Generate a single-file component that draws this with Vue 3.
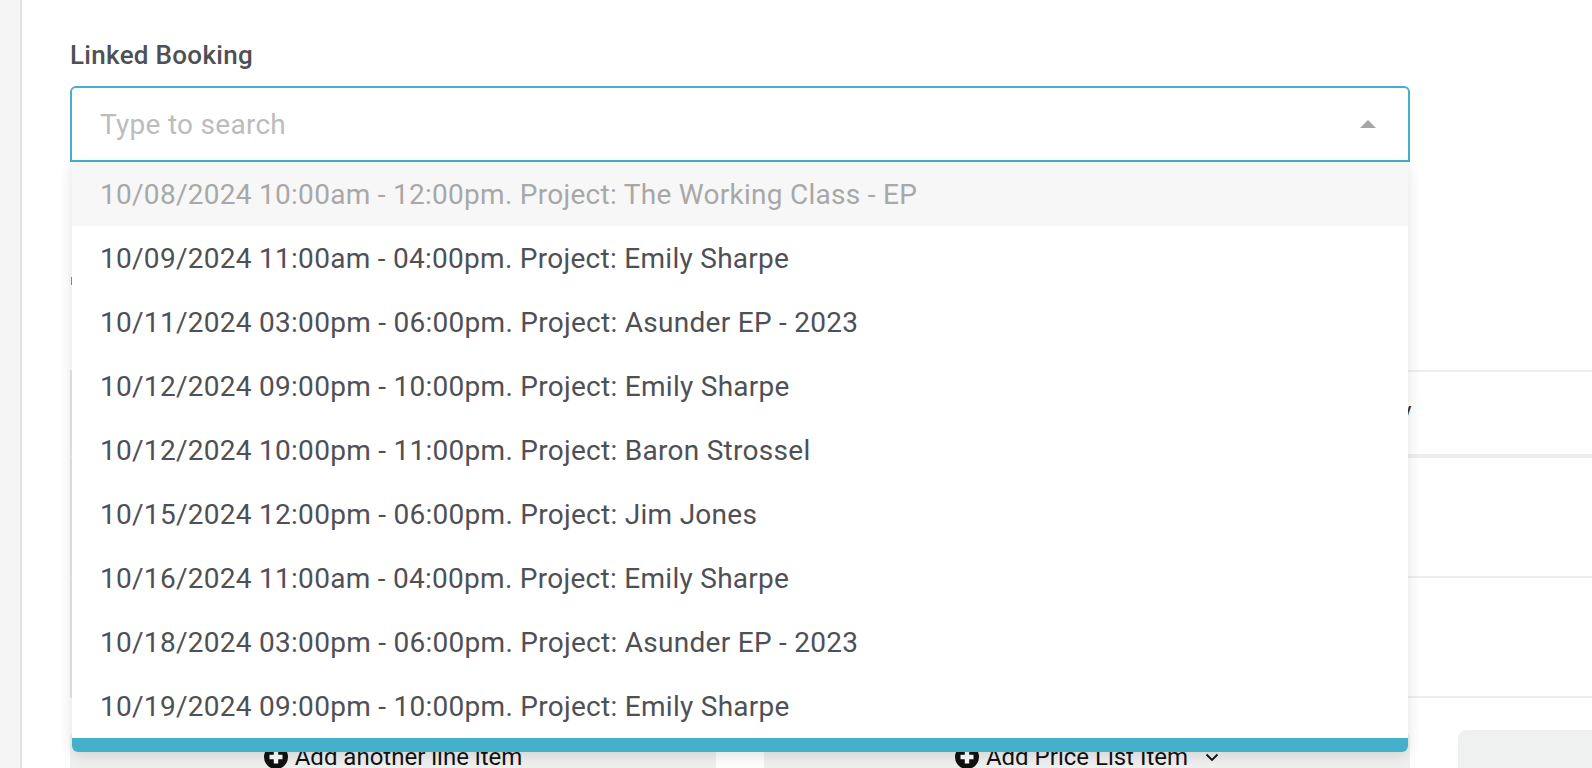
<template>
  <div class="page">
    <aside class="rail"></aside>
    <main class="content">
      <label class="field-label">Linked Booking</label>
      <div class="select">
        <div class="select-box">
          <span class="placeholder">Type to search</span>
          <span class="caret"></span>
        </div>
        <ul class="menu">
          <li v-for="b in bookings" :key="b.text" :class="{ disabled: b.disabled }">{{ b.text }}</li>
          <li class="menu-foot"></li>
        </ul>
      </div>

      <div class="behind">
        <div class="row row-a"><span class="tick"></span></div>
        <div class="row row-b"><span class="stub">v</span></div>
        <div class="row row-c"></div>
        <div class="row row-d"></div>
      </div>

      <div class="actions">
        <button class="add-btn">
          <svg class="plus" viewBox="0 0 24 24"><circle cx="12" cy="12" r="12" fill="#111" /><path d="M12 5.5v13M5.5 12h13" stroke="#fff" stroke-width="4.4" /></svg>
          Add another line item
        </button>
        <button class="add-btn">
          <svg class="plus" viewBox="0 0 24 24"><circle cx="12" cy="12" r="12" fill="#111" /><path d="M12 5.5v13M5.5 12h13" stroke="#fff" stroke-width="4.4" /></svg>
          Add Price List Item
          <svg class="chev" viewBox="0 0 14 9"><path d="M1.5 1.5 7 7l5.5-5.5" fill="none" stroke="#111" stroke-width="1.8" /></svg>
        </button>
        <div class="totals"></div>
      </div>
    </main>
  </div>
</template>

<script setup>
const bookings = [
  { text: '10/08/2024 10:00am - 12:00pm. Project: The Working Class - EP', disabled: true },
  { text: '10/09/2024 11:00am - 04:00pm. Project: Emily Sharpe' },
  { text: '10/11/2024 03:00pm - 06:00pm. Project: Asunder EP - 2023' },
  { text: '10/12/2024 09:00pm - 10:00pm. Project: Emily Sharpe' },
  { text: '10/12/2024 10:00pm - 11:00pm. Project: Baron Strossel' },
  { text: '10/15/2024 12:00pm - 06:00pm. Project: Jim Jones' },
  { text: '10/16/2024 11:00am - 04:00pm. Project: Emily Sharpe' },
  { text: '10/18/2024 03:00pm - 06:00pm. Project: Asunder EP - 2023' },
  { text: '10/19/2024 09:00pm - 10:00pm. Project: Emily Sharpe' }
]
</script>

<style>
html, body { margin: 0; height: 100%; overflow: hidden; background: #fff; }
</style>

<style scoped>
.page {
  display: flex;
  height: 768px;
  overflow: hidden;
  font-family: Roboto, "Liberation Sans", sans-serif;
  color: #4f5055;
}
.rail {
  width: 20px;
  flex: none;
  background: #f5f5f5;
  border-right: 2px solid #e3e3e3;
}
.content {
  flex: 1;
  min-width: 0;
  padding: 38px 0 0 48px;
}
.field-label {
  display: block;
  font-size: 26px;
  font-weight: 500;
  letter-spacing: 0.3px;
  line-height: 34px;
  margin-bottom: 14px;
}
.select {
  position: relative;
  width: 1340px;
}
.select-box {
  box-sizing: border-box;
  height: 76px;
  display: flex;
  align-items: center;
  justify-content: space-between;
  padding: 0 32px 0 28px;
  border: 2px solid #45b0c9;
  border-radius: 6px 6px 0 0;
}
.placeholder {
  font-size: 28px;
  letter-spacing: 0.28px;
  color: #bcbcbc;
}
.caret {
  width: 0;
  height: 0;
  border-left: 8px solid transparent;
  border-right: 8px solid transparent;
  border-bottom: 8px solid #a6a6a6;
}
.menu {
  position: absolute;
  z-index: 5;
  top: 76px;
  left: 2px;
  right: 2px;
  margin: 0;
  padding: 0;
  list-style: none;
  background: #fff;
  border-radius: 0 0 6px 6px;
  overflow: hidden;
  box-shadow: 0 4px 14px rgba(0, 0, 0, 0.12);
}
.menu li {
  height: 64px;
  line-height: 66px;
  padding-left: 28px;
  font-size: 28px;
  letter-spacing: 0.28px;
  white-space: nowrap;
}
.menu li.disabled {
  background: #f7f7f7;
  color: #a8a8a8;
}
.menu li.menu-foot {
  height: 14px;
  padding: 0;
  background: #45b0c9;
}
.row {
  box-sizing: border-box;
  position: relative;
  border-bottom: 2px solid #eeeeee;
}
.row-a { height: 208px; border-bottom: 0; }
.row-b { height: 88px; border-top: 2px solid #eeeeee; border-bottom-width: 4px; }
.row-c { height: 120px; }
.row-d { height: 120px; }
.row-b, .row-c, .row-d { border-left: 2px solid #e6e6e6; }
.tick {
  position: absolute;
  left: 1px;
  top: 115px;
  width: 1px;
  height: 8px;
  background: #8a8a8a;
}
.stub {
  position: absolute;
  left: 1328px;
  top: 24px;
  font-size: 24px;
  line-height: 30px;
  color: #333438;
}
.actions {
  display: flex;
  align-items: flex-start;
  gap: 48px;
  margin-top: 32px;
}
.add-btn {
  width: 646px;
  height: 60px;
  flex: none;
  border: 0;
  border-radius: 8px 8px 0 0;
  background: #eff1f1;
  font-family: inherit;
  font-size: 24px;
  line-height: 30px;
  color: #111;
  display: flex;
  align-items: center;
  justify-content: center;
  gap: 7px;
  padding: 0 0 6px;
}
.plus { width: 24px; height: 24px; flex: none; }
.chev { width: 14px; height: 9px; margin-left: 10px; }
.totals {
  flex: 1;
  height: 60px;
  background: #eff1f1;
  border-radius: 8px 0 0 0;
}
</style>
